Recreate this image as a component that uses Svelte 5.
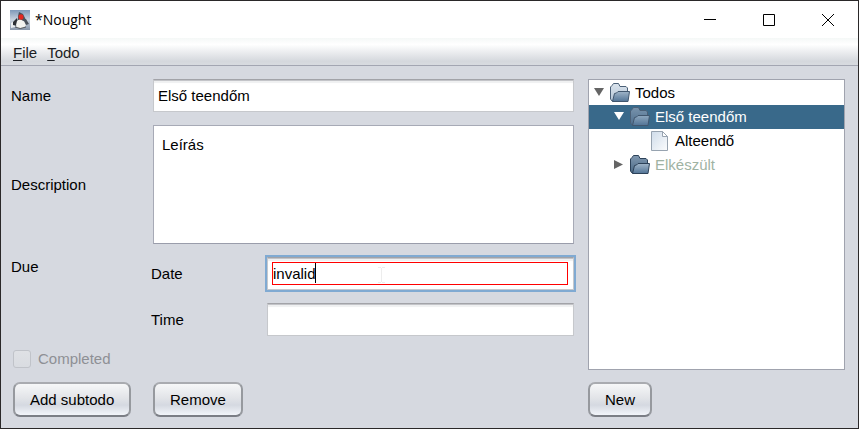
<script>
  let name = $state('Első teendőm');
  let description = $state('Leírás');
  let date = $state('invalid');
  let time = $state('');

  const nodes = [
    { label: 'Todos', level: 0, kind: 'folder', open: true },
    { label: 'Első teendőm', level: 1, kind: 'folder', open: true, selected: true },
    { label: 'Alteendő', level: 2, kind: 'file' },
    { label: 'Elkészült', level: 1, kind: 'folder', open: false, done: true }
  ];
</script>

<div class="window">
  <header class="titlebar">
    <svg class="logo" width="20" height="20" viewBox="0 0 20 20" aria-hidden="true">
      <defs>
        <linearGradient id="sky" x1="0" y1="0" x2="0" y2="1">
          <stop offset="0" stop-color="#7f99b8" />
          <stop offset=".5" stop-color="#c9d3de" />
          <stop offset="1" stop-color="#8796aa" />
        </linearGradient>
      </defs>
      <rect width="20" height="20" fill="url(#sky)" />
      <path d="M1 13 6 10 5 17 1 18z" fill="#e9edf0" />
      <path d="M3 12 7 8 8 12 7 16 3 15z" fill="#2c3036" />
      <path d="M9 2 8 6 8 10 14 11 15 8 13 4z" fill="#4a4f57" />
      <path d="M7 11Q10 8 13 11L15 12 16 15 14 18H7L6 15z" fill="#f3f3ef" />
      <path d="M14 8 16 9 19 14 16 15 14 11z" fill="#4a515a" />
      <path d="M5 17Q10 20 16 17" fill="none" stroke="#55585c" />
      <ellipse cx="11" cy="7" rx="2.5" ry="2.8" fill="#e42820" />
    </svg>
    <span class="title">*Nought</span>
    <button class="winbtn" aria-label="Minimize">
      <svg width="12" height="12" viewBox="0 0 12 12"><path d="M0 5.5H12" /></svg>
    </button>
    <button class="winbtn" aria-label="Maximize">
      <svg width="12" height="12" viewBox="0 0 12 12"><path d="M.5 .5H11.5V11.5H.5z" /></svg>
    </button>
    <button class="winbtn" aria-label="Close">
      <svg width="12" height="12" viewBox="0 0 12 12"><path d="M0 0 12 12M12 0 0 12" /></svg>
    </button>
  </header>

  <nav class="menubar">
    <button><u>F</u>ile</button>
    <button><u>T</u>odo</button>
  </nav>

  <main>
    <form class="form" onsubmit={(e) => e.preventDefault()}>
      <label for="name">Name</label>
      <input id="name" class="field" type="text" bind:value={name} />

      <label for="description">Description</label>
      <textarea id="description" class="area" bind:value={description}></textarea>

      <span class="due">Due</span>
      <div class="dates">
        <label for="date">Date</label>
        <div class="field focused">
          <input id="date" type="text" bind:value={date} aria-invalid="true" />
          <span class="caret"></span>
          <svg class="ibeam" width="7" height="16" viewBox="0 0 7 16" aria-hidden="true">
            <path d="M0 .5H3M4 .5H7M3.5 1V15M0 15.5H3M4 15.5H7" />
          </svg>
        </div>
        <label for="time">Time</label>
        <input id="time" class="field" type="text" bind:value={time} />
      </div>

      <label class="check"><input type="checkbox" disabled />Completed</label>

      <div class="cell"><button class="btn" type="button">Add subtodo</button></div>
      <div class="cell"><button class="btn" type="button">Remove</button></div>
    </form>

    <aside>
      <ul class="tree" role="tree">
        {#each nodes as node, i}
          <li
            role="treeitem"
            aria-selected={node.selected ?? false}
            class:selected={node.selected}
            class:done={node.done}
            class="level{node.level}"
          >
            <svg class="arrow" width="11" height="12" viewBox="0 0 11 12" aria-hidden="true">
              {#if node.kind === 'folder'}
                <path d={node.open ? 'M0 1H10L5 9z' : 'M0 1 9 5.500 0 10z'} />
              {/if}
            </svg>
            {#if node.kind === 'file'}
              <svg width="20" height="20" viewBox="0 0 20 20" aria-hidden="true">
                <defs>
                  <linearGradient id="paper" x1="0" y1="0" x2="1" y2="1">
                    <stop offset="0" stop-color="#cfdcea" />
                    <stop offset="1" stop-color="#fbfcfd" />
                  </linearGradient>
                </defs>
                <path d="M1.500 .5H12.500L17.500 5.500V19.500H1.500z" fill="url(#paper)" stroke="#97a3b0" />
                <path d="M12.500 .5V5.500H17.500z" fill="#fff" stroke="#97a3b0" />
              </svg>
            {:else}
              <svg width="20" height="20" viewBox="0 0 20 20" aria-hidden="true">
                <defs>
                  <linearGradient id="back{i}" x1="0" y1="0" x2="0" y2="1">
                    <stop offset="0" stop-color={node.done ? '#8199b1' : node.selected ? '#7893ac' : '#dbe4ed'} />
                    <stop offset="1" stop-color={node.done ? '#4a6885' : node.selected ? '#4f6f8e' : '#b3c4d5'} />
                  </linearGradient>
                  <linearGradient id="front{i}" x1="0" y1="0" x2="0" y2="1">
                    <stop offset="0" stop-color={node.selected ? '#8fa8bf' : '#a0b5c9'} />
                    <stop offset="1" stop-color="#527496" />
                  </linearGradient>
                </defs>
                <path
                  d="M.5 16V4L2 2.500 3.500 .5H8.500L10 3.500H16L17.500 5V17.500L2 18z"
                  fill="url(#back{i})"
                  stroke={node.done ? '#2d4259' : '#4b6077'}
                />
                <path
                  d="M2.500 18.500 4.500 10.500 6.500 10 8 8.500H19.500L18 18.500z"
                  fill="url(#front{i})"
                  stroke={node.done ? '#2d4259' : '#41576f'}
                />
              </svg>
            {/if}
            <span>{node.label}</span>
          </li>
        {/each}
      </ul>
      <div class="cell"><button class="btn" type="button">New</button></div>
    </aside>
  </main>
</div>

<style>
  :global(body) {
    margin: 0;
  }

  .window {
    box-sizing: border-box;
    min-height: 100vh;
    display: flex;
    flex-direction: column;
    border: 1px solid #2a2829;
    background: #d6d9e0;
    color: #000;
    font: 15px/20px 'Liberation Sans', Arial, sans-serif;
  }

  button,
  input,
  textarea {
    box-sizing: border-box;
    margin: 0;
    font: inherit;
    color: inherit;
  }

  .titlebar {
    display: flex;
    align-items: center;
    height: 37px;
    padding-left: 9px;
    background: #fff;
  }

  .title {
    flex: 1;
    padding-left: 5px;
    font: 14px/20px 'Open Sans', 'Noto Sans', sans-serif;
  }

  .winbtn {
    display: grid;
    place-items: center;
    width: 59px;
    height: 37px;
    padding: 0 2px 0 0;
    border: 0;
    background: none;
  }

  .winbtn path {
    fill: none;
    stroke: #000;
  }

  .menubar {
    display: flex;
    align-items: center;
    gap: 10px;
    height: 28px;
    padding: 2px 12px 0;
    box-sizing: border-box;
    border-bottom: 1px solid #a3a6b2;
    background: linear-gradient(#f5f8f7, #fff 24%, #e6e8eb 60%, #d5d8dd 86%, #d8dbe0);
    color: #1c1f24;
  }

  .menubar button {
    padding: 0;
    border: 0;
    background: none;
  }

  u {
    text-underline-offset: 2px;
  }

  main {
    flex: 1;
    display: flex;
    gap: 10px;
    padding: 13px 11px 11px 10px;
  }

  .form {
    flex: 1;
    display: grid;
    grid-template-columns: 140px 1fr;
    grid-template-rows: 33px 1fr auto 20px 35px;
    gap: 13px 0;
    align-items: center;
  }

  .field {
    height: 33px;
    margin: 0 2px;
    padding: 0 4px;
    border: 1px solid #c6c8cc;
    border-top-color: #a2a3a8;
    background: #fff;
    box-shadow: inset 0 1px #c3c4c8, inset 0 3px 1px #eff0f1;
    outline: 0;
  }

  .area {
    align-self: stretch;
    min-height: 118px;
    margin: 0 2px;
    padding: 9px 8px;
    border: 1px solid #a7aab6;
    border-bottom-color: #9a9dab;
    background: #fff;
    resize: none;
    outline: 0;
  }

  .due {
    align-self: start;
  }

  .dates {
    display: grid;
    grid-template-columns: 114px 1fr;
    gap: 13px 0;
    align-items: center;
  }

  .focused {
    position: relative;
    display: flex;
    box-sizing: border-box;
    padding: 4px 5px 4px 4px;
    box-shadow: 0 0 0 2px #80aad2, inset 0 1px #c3c4c8, inset 0 3px 1px #eff0f1;
  }

  .focused input {
    flex: 1;
    min-width: 0;
    padding: 0;
    border: 1px solid #f00;
    background: #fff;
    outline: 0;
  }

  .caret {
    position: absolute;
    left: 47px;
    top: 5px;
    width: 1px;
    height: 20px;
    background: #000;
  }

  .ibeam {
    position: absolute;
    left: 110px;
    top: 9px;
    fill: none;
    stroke: #ededed;
  }

  .check {
    grid-column: 1 / -1;
    display: flex;
    align-items: center;
    gap: 7px;
    padding-left: 2px;
    color: #8e9095;
  }

  .check input {
    appearance: none;
    width: 18px;
    height: 18px;
    border: 1px solid #c0c3c9;
    border-radius: 3px;
    background: linear-gradient(#dfe1e5, #d9dce1);
  }

  .cell {
    padding: 0 2px;
  }

  .btn {
    display: block;
    height: 35px;
    padding: 0 15px;
    border: 2px solid;
    border-color: #a9abb0 #96999e #7b7e85;
    border-radius: 7px;
    background: linear-gradient(#f6f7f8, #e2e4e8 45%, #d5d9e1 68%, #f2f5fa);
  }

  aside {
    width: 261px;
    display: flex;
    flex-direction: column;
    gap: 12px;
  }

  .tree {
    flex: 1;
    margin: 0 2px;
    padding: 1px 0 0;
    border: 1px solid #a0a3ae;
    background: #fff;
    list-style: none;
  }

  li {
    display: flex;
    align-items: center;
    gap: 5px;
    height: 24px;
    padding-left: 5px;
  }

  .level1 {
    padding-left: 25px;
  }

  .level2 {
    padding-left: 45px;
  }

  .arrow {
    fill: #656565;
  }

  .selected {
    background: #39698a;
    color: #fff;
  }

  .selected .arrow {
    fill: #fff;
  }

  .done {
    color: #9fb3a3;
  }
</style>
